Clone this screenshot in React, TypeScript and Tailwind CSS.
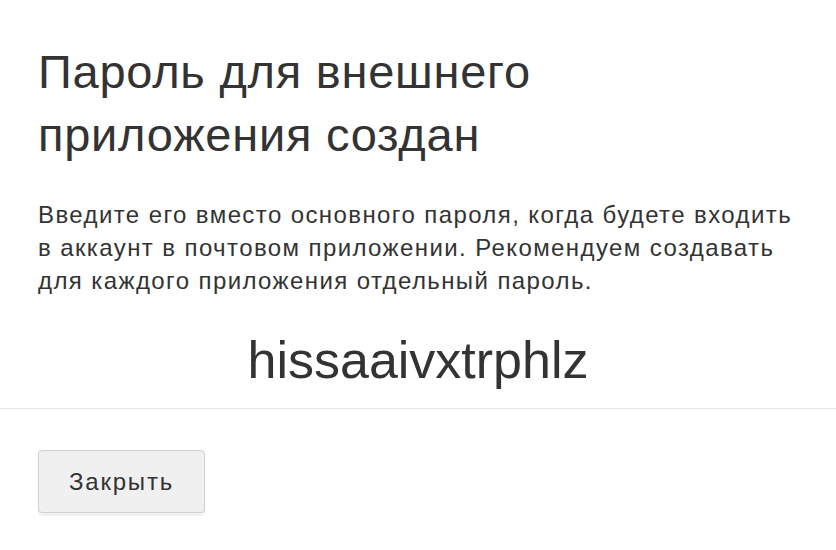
import React from "react";

const App: React.FC = () => {
  return (
    <div className="w-[836px] h-[550px] bg-white text-[#333333] font-['Liberation_Sans',Arial,sans-serif] overflow-hidden">
      <div className="px-[38px] pt-[40px]">
        <h1 className="text-[47px] leading-[63px] font-normal tracking-[0.75px]">
          Пароль для внешнего
          <br />
          приложения создан
        </h1>
        <p className="mt-[32px] text-[24px] leading-[33px] tracking-[1.4px] whitespace-nowrap">
          Введите его вместо основного пароля, когда будете входить
          <br />
          в аккаунт в почтовом приложении. Рекомендуем создавать
          <br />
          для каждого приложения отдельный пароль.
        </p>
        <div className="mt-[33px] text-center text-[52px] leading-[60px]">hissaaivxtrphlz</div>
      </div>
      <div className="mt-[18px] border-t border-[#e5e5e5]" />
      <div className="px-[38px] pt-[41px]">
        <button
          type="button"
          className="w-[167px] h-[63px] rounded-[4px] border border-[#d0d0d0] bg-[#f0f0f0] text-[24px] tracking-[1.8px] text-[#333333] shadow-[0_3px_0_rgba(0,0,0,0.05)]"
        >
          Закрыть
        </button>
      </div>
    </div>
  );
};

export default App;
